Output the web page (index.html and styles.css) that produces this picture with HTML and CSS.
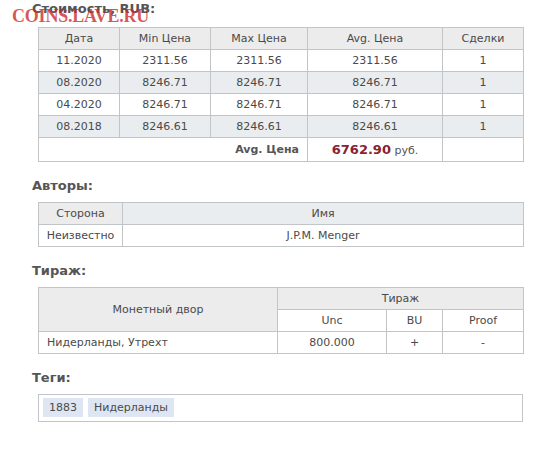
FILE: index.html
```html
<!DOCTYPE html>
<html>
<head>
<meta charset="utf-8">
<link rel="stylesheet" href="styles.css">
</head>
<body>
<div class="page">
  <div class="watermark">COINS.LAVE.RU</div>

  <section class="block first">
    <h3 class="heading">Стоимость, RUB:</h3>
    <table class="grid prices">
      <colgroup><col style="width:81px"><col style="width:91px"><col style="width:97px"><col style="width:135px"><col style="width:81px"></colgroup>
      <thead>
        <tr><th>Дата</th><th>Min Цена</th><th>Max Цена</th><th>Avg. Цена</th><th>Сделки</th></tr>
      </thead>
      <tbody>
        <tr><td>11.2020</td><td>2311.56</td><td>2311.56</td><td>2311.56</td><td>1</td></tr>
        <tr class="alt"><td>08.2020</td><td>8246.71</td><td>8246.71</td><td>8246.71</td><td>1</td></tr>
        <tr><td>04.2020</td><td>8246.71</td><td>8246.71</td><td>8246.71</td><td>1</td></tr>
        <tr class="alt"><td>08.2018</td><td>8246.61</td><td>8246.61</td><td>8246.61</td><td>1</td></tr>
        <tr class="avg"><td colspan="3" class="avg-label">Avg. Цена</td><td><span class="avg-value">6762.90</span> <span class="cur">руб.</span></td><td></td></tr>
      </tbody>
    </table>
  </section>

  <section class="block">
    <h3 class="heading">Авторы:</h3>
    <table class="grid">
      <colgroup><col style="width:84px"><col style="width:401px"></colgroup>
      <thead><tr><th>Сторона</th><th class="blue">Имя</th></tr></thead>
      <tbody><tr><td>Неизвестно</td><td>J.P.M. Menger</td></tr></tbody>
    </table>
  </section>

  <section class="block">
    <h3 class="heading">Тираж:</h3>
    <table class="grid mint">
      <colgroup><col style="width:239px"><col style="width:109px"><col style="width:56px"><col style="width:81px"></colgroup>
      <thead>
        <tr><th rowspan="2" class="tall">Монетный двор</th><th colspan="3">Тираж</th></tr>
        <tr class="sub"><th>Unc</th><th>BU</th><th>Proof</th></tr>
      </thead>
      <tbody><tr><td class="left">Нидерланды, Утрехт</td><td>800.000</td><td>+</td><td>-</td></tr></tbody>
    </table>
  </section>

  <section class="block">
    <h3 class="heading">Теги:</h3>
    <div class="tags">
      <span class="tag">1883</span>
      <span class="tag">Нидерланды</span>
    </div>
  </section>
</div>
</body>
</html>
```

FILE: styles.css
```css
html, body {
  margin: 0;
  padding: 0;
  background: #ffffff;
}
body {
  font-family: "DejaVu Sans", Verdana, sans-serif;
  font-size: 11px;
  color: #4a4a4a;
}
.page {
  position: relative;
  padding: 0 0 0 32px;
  width: 491px;
}
.watermark {
  position: absolute;
  left: 12px;
  top: 6px;
  font-family: "Liberation Serif", "Times New Roman", serif;
  font-weight: bold;
  font-size: 18px;
  line-height: 20px;
  color: rgba(205, 40, 40, 0.78);
  letter-spacing: -0.2px;
  pointer-events: none;
}
.block {
  margin-top: 15px;
}
.block.first {
  margin-top: 0;
}
.heading {
  margin: 0 0 8px 0;
  font-size: 13px;
  line-height: 17px;
  font-weight: bold;
  color: #555;
}
.block.first .heading {
  margin-bottom: 10px;
}
.grid {
  margin-left: 6px;
  width: 485px;
  border-collapse: collapse;
  table-layout: fixed;
}
.grid th, .grid td {
  border: 1px solid #c2c5c8;
  height: 21px;
  padding: 0 4px;
  text-align: center;
  vertical-align: middle;
  font-weight: normal;
  color: #4a4a4a;
  white-space: nowrap;
}
.grid th {
  background: #ececec;
}
.grid th.blue {
  background: #e9edf0;
}
.grid tr.alt td {
  background: #e9edf0;
}
.grid tr.sub th {
  background: #ffffff;
}
.grid th.tall {
  height: 43px;
}
.grid td.left {
  text-align: left;
  padding-left: 8px;
}
.prices tr.avg td {
  height: 23px;
}
.prices td.avg-label {
  text-align: right;
  font-weight: bold;
  color: #555;
  padding-right: 8px;
}
.avg-value {
  font-weight: bold;
  font-size: 13px;
  color: #8b2231;
}
.cur {
  color: #555;
}
.tags {
  box-sizing: border-box;
  margin-left: 6px;
  width: 485px;
  border: 1px solid #c2c5c8;
  padding: 3px 4px 4px;
  display: flex;
  gap: 5px;
}
.tag {
  background: #dde6f2;
  color: #4a4a4a;
  padding: 0 6px;
  height: 19px;
  line-height: 19px;
}
```
